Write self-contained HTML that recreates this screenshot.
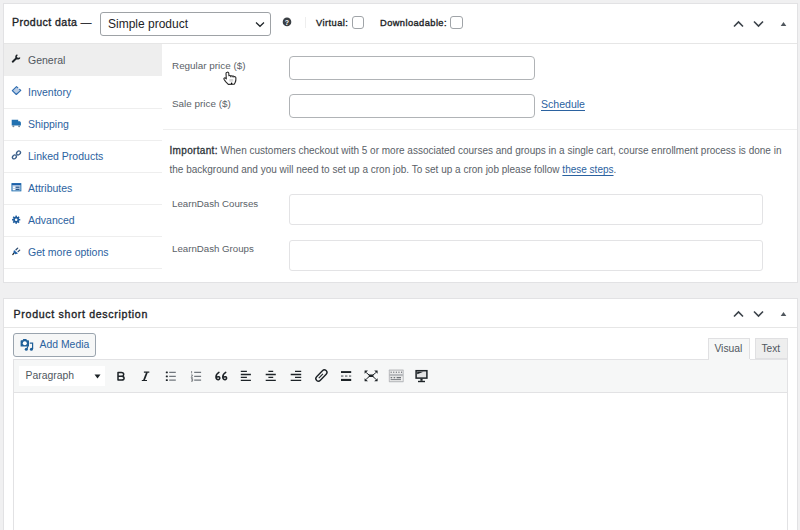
<!DOCTYPE html>
<html><head><meta charset="utf-8"><style>
html,body{margin:0;padding:0}
body{width:800px;height:530px;overflow:hidden;position:relative;background:#f0f0f1;font-family:"Liberation Sans", sans-serif}
</style></head><body>
<div style="position:absolute;left:3px;top:3px;width:795px;height:280px;box-sizing:border-box;border:1px solid #e2e2e4;background:#fff"></div>
<div style="position:absolute;left:4px;top:43px;width:793px;height:1px;background:#e6e6e6"></div>
<div style="position:absolute;left:4px;top:44px;width:158px;height:32px;background:#eeeeee"></div>
<div style="position:absolute;left:4px;top:108px;width:158px;height:1px;background:#eeeeee"></div>
<div style="position:absolute;left:4px;top:140px;width:158px;height:1px;background:#eeeeee"></div>
<div style="position:absolute;left:4px;top:172px;width:158px;height:1px;background:#eeeeee"></div>
<div style="position:absolute;left:4px;top:204px;width:158px;height:1px;background:#eeeeee"></div>
<div style="position:absolute;left:4px;top:236px;width:158px;height:1px;background:#eeeeee"></div>
<div style="position:absolute;left:4px;top:268px;width:158px;height:1px;background:#eeeeee"></div>
<div style="position:absolute;left:12px;top:17.03px;font-size:10.6px;line-height:10.6px;font-weight:400;color:#1d2327;white-space:nowrap;letter-spacing:0.44px;-webkit-text-stroke:0.35px #1d2327">Product data —</div>
<div style="position:absolute;left:100px;top:12px;width:171px;height:24px;box-sizing:border-box;border:1px solid #9ea2a6;border-radius:3px;background:#fff"></div>
<div style="position:absolute;left:108px;top:17.84px;font-size:12px;line-height:12px;font-weight:400;color:#1d2327;white-space:nowrap;">Simple product</div>
<svg style="position:absolute;left:255px;top:21px" width="10" height="7" viewBox="0 0 10 7"><path d="M1 1.5 L5 5.3 L9 1.5" fill="none" stroke="#1d2327" stroke-width="1.2"/></svg>
<svg style="position:absolute;left:282px;top:17px" width="10" height="10" viewBox="0 0 10 10"><circle cx="5" cy="4.9" r="4.3" fill="#3a3f44"/><text x="5" y="7.6" font-family="Liberation Sans" font-weight="700" font-size="7" fill="#fff" text-anchor="middle">?</text></svg>
<div style="position:absolute;left:305px;top:17px;width:1px;height:11px;background:#eeeeee"></div>
<div style="position:absolute;left:316px;top:18.73px;font-size:9.3px;line-height:9.3px;font-weight:400;color:#1d2327;white-space:nowrap;letter-spacing:0.45px;-webkit-text-stroke:0.35px #1d2327">Virtual:</div>
<div style="position:absolute;left:352px;top:16px;width:12px;height:12.5px;box-sizing:border-box;border:1px solid #a0a4a8;border-radius:3px;background:#fff"></div>
<div style="position:absolute;left:380px;top:18.73px;font-size:9.3px;line-height:9.3px;font-weight:400;color:#1d2327;white-space:nowrap;letter-spacing:0.42px;-webkit-text-stroke:0.35px #1d2327">Downloadable:</div>
<div style="position:absolute;left:450px;top:16px;width:12.5px;height:12.5px;box-sizing:border-box;border:1px solid #a0a4a8;border-radius:3px;background:#fff"></div>
<svg style="position:absolute;left:732px;top:19px" width="60" height="10" viewBox="0 0 60 10"><path d="M2 7.5 L6.5 3 L11 7.5" fill="none" stroke="#3c434a" stroke-width="1.6"/><path d="M22 2.5 L26.5 7 L31 2.5" fill="none" stroke="#3c434a" stroke-width="1.6"/><path d="M48.7 7 L51.5 3 L54.3 7 Z" fill="#50575e"/></svg>
<div style="position:absolute;left:28px;top:54.81px;font-size:10.5px;line-height:10.5px;font-weight:400;color:#50575e;white-space:nowrap;">General</div>
<div style="position:absolute;left:28px;top:86.81px;font-size:10.5px;line-height:10.5px;font-weight:400;color:#2b62a0;white-space:nowrap;">Inventory</div>
<div style="position:absolute;left:28px;top:118.81px;font-size:10.5px;line-height:10.5px;font-weight:400;color:#2b62a0;white-space:nowrap;">Shipping</div>
<div style="position:absolute;left:28px;top:150.81px;font-size:10.5px;line-height:10.5px;font-weight:400;color:#2b62a0;white-space:nowrap;">Linked Products</div>
<div style="position:absolute;left:28px;top:182.81px;font-size:10.5px;line-height:10.5px;font-weight:400;color:#2b62a0;white-space:nowrap;">Attributes</div>
<div style="position:absolute;left:28px;top:214.81px;font-size:10.5px;line-height:10.5px;font-weight:400;color:#2b62a0;white-space:nowrap;">Advanced</div>
<div style="position:absolute;left:28px;top:246.81px;font-size:10.5px;line-height:10.5px;font-weight:400;color:#2b62a0;white-space:nowrap;">Get more options</div>
<div style="position:absolute;left:172px;top:60.82px;font-size:9.9px;line-height:9.9px;font-weight:400;color:#5a6167;white-space:nowrap;">Regular price ($)</div>
<div style="position:absolute;left:289px;top:56px;width:246px;height:23.5px;box-sizing:border-box;border:1px solid #b0b3b6;border-radius:4px;background:#fff"></div>
<div style="position:absolute;left:172px;top:99.32px;font-size:9.9px;line-height:9.9px;font-weight:400;color:#5a6167;white-space:nowrap;">Sale price ($)</div>
<div style="position:absolute;left:289px;top:94px;width:246px;height:24px;box-sizing:border-box;border:1px solid #b0b3b6;border-radius:4px;background:#fff"></div>
<div style="position:absolute;left:541px;top:98.77px;font-size:10.55px;line-height:10.55px;font-weight:400;color:#2b62a0;white-space:nowrap;text-decoration:underline;text-decoration-thickness:0.8px;text-underline-offset:1.5px">Schedule</div>
<div style="position:absolute;left:163px;top:129px;width:634px;height:1px;background:#eeeeee"></div>
<div style="position:absolute;left:169.5px;top:146.03px;font-size:10.0px;line-height:10.0px;font-weight:400;color:#5a6167;white-space:nowrap;"><span style="color:#2c3338;letter-spacing:0.33px;-webkit-text-stroke:0.3px #2c3338">Important:</span> When customers checkout with 5 or more associated courses and groups in a single cart, course enrollment process is done in</div>
<div style="position:absolute;left:169.5px;top:164.84px;font-size:10.0px;line-height:10.0px;font-weight:400;color:#5a6167;white-space:nowrap;">the background and you will need to set up a cron job. To set up a cron job please follow <span style="color:#2b62a0;text-decoration:underline;text-decoration-thickness:0.8px;text-underline-offset:1.5px">these steps</span>.</div>
<div style="position:absolute;left:172px;top:198.79px;font-size:9.7px;line-height:9.7px;font-weight:400;color:#5a6167;white-space:nowrap;">LearnDash Courses</div>
<div style="position:absolute;left:289px;top:194px;width:474px;height:31px;box-sizing:border-box;border:1px solid #e3e3e5;border-radius:3px;background:#fff"></div>
<div style="position:absolute;left:172px;top:244.49px;font-size:9.7px;line-height:9.7px;font-weight:400;color:#5a6167;white-space:nowrap;">LearnDash Groups</div>
<div style="position:absolute;left:289px;top:240px;width:474px;height:31px;box-sizing:border-box;border:1px solid #e3e3e5;border-radius:3px;background:#fff"></div>
<div style="position:absolute;left:3px;top:298px;width:795px;height:260px;box-sizing:border-box;border:1px solid #e2e2e4;background:#fff"></div>
<div style="position:absolute;left:4px;top:327px;width:793px;height:1px;background:#e6e6e6"></div>
<div style="position:absolute;left:13.6px;top:308.83px;font-size:10.6px;line-height:10.6px;font-weight:400;color:#1d2327;white-space:nowrap;letter-spacing:0.69px;-webkit-text-stroke:0.35px #1d2327">Product short description</div>
<svg style="position:absolute;left:732px;top:308.5px" width="60" height="10" viewBox="0 0 60 10"><path d="M2 7.5 L6.5 3 L11 7.5" fill="none" stroke="#3c434a" stroke-width="1.6"/><path d="M22 2.5 L26.5 7 L31 2.5" fill="none" stroke="#3c434a" stroke-width="1.6"/><path d="M48.7 7 L51.5 3 L54.3 7 Z" fill="#50575e"/></svg>
<div style="position:absolute;left:13px;top:333px;width:83px;height:23.5px;box-sizing:border-box;border:1px solid #9aa4ae;border-radius:3px;background:#f6f7f7"></div>
<div style="position:absolute;left:39.6px;top:340.40px;font-size:10.4px;line-height:10.4px;font-weight:400;color:#2b62a0;white-space:nowrap;">Add Media</div>
<div style="position:absolute;left:708px;top:338px;width:42px;height:22px;box-sizing:border-box;border:1px solid #e0e0e2;border-bottom:none;background:#f6f7f7"></div>
<div style="position:absolute;left:714.4px;top:343.94px;font-size:10.35px;line-height:10.35px;font-weight:400;color:#50575e;white-space:nowrap;">Visual</div>
<div style="position:absolute;left:754.5px;top:338px;width:33.5px;height:21px;box-sizing:border-box;border:1px solid #e0e0e2;background:#eeeeee"></div>
<div style="position:absolute;left:761.5px;top:344.15px;font-size:10.1px;line-height:10.1px;font-weight:400;color:#50575e;white-space:nowrap;">Text</div>
<div style="position:absolute;left:13px;top:359px;width:775px;height:34px;box-sizing:border-box;border:1px solid #e2e2e4;background:#f6f7f7"></div>
<div style="position:absolute;left:708.5px;top:359px;width:41px;height:1.5px;background:#f6f7f7"></div>
<div style="position:absolute;left:18.5px;top:365.5px;width:86.5px;height:20.5px;background:#fff"></div>
<div style="position:absolute;left:25.6px;top:370.80px;font-size:10.4px;line-height:10.4px;font-weight:400;color:#50575e;white-space:nowrap;">Paragraph</div>
<svg style="position:absolute;left:94px;top:374px" width="7" height="5" viewBox="0 0 7 5"><path d="M0.5 0.5 L6.5 0.5 L3.5 4.5 Z" fill="#1d2327"/></svg>
<div style="position:absolute;left:13px;top:393px;width:775px;height:200px;box-sizing:border-box;border:1px solid #e2e2e4;border-top:none;background:#fff"></div>
<svg style="position:absolute;left:8px;top:50px;overflow:visible" width="18" height="18" viewBox="0 0 18 18"><path d="M4.7 11.7 L8.6 8.0" stroke="#1d2327" stroke-width="1.9" stroke-linecap="round"/><path d="M9.4 5.0 A1.9 1.9 0 1 0 11.7 7.5" fill="none" stroke="#1d2327" stroke-width="1.6"/></svg>
<svg style="position:absolute;left:8px;top:82px;overflow:visible" width="18" height="18" viewBox="0 0 18 18"><path d="M4.3 8.7 L8.5 4.6 L12.8 8.3 L8.3 12.5 Z" fill="#b9cce4" stroke="#2d6cb0" stroke-width="1.1" stroke-linejoin="round"/><circle cx="10.9" cy="6.4" r="0.8" fill="#fff"/></svg>
<svg style="position:absolute;left:8px;top:114px;overflow:visible" width="18" height="18" viewBox="0 0 18 18"><path d="M3.7 5.8 H10.2 V7.3 H12.0 L12.9 8.6 V11.6 H3.7 Z" fill="#2271b1"/><circle cx="5.4" cy="12.3" r="1.0" fill="#7a8a9a"/><circle cx="11.1" cy="12.3" r="1.0" fill="#7a8a9a"/></svg>
<svg style="position:absolute;left:8px;top:146px;overflow:visible" width="18" height="18" viewBox="0 0 18 18"><g fill="none" stroke="#3b5f8a" stroke-width="1.3"><ellipse cx="6.4" cy="10.9" rx="2.2" ry="1.7" transform="rotate(-45 6.4 10.9)"/><ellipse cx="10.5" cy="6.9" rx="2.2" ry="1.7" transform="rotate(-45 10.5 6.9)"/></g></svg>
<svg style="position:absolute;left:8px;top:178px;overflow:visible" width="18" height="18" viewBox="0 0 18 18"><rect x="3.9" y="5.6" width="9" height="7.3" fill="#b5c9e2" stroke="#2271b1" stroke-width="0.9"/><rect x="3.9" y="5.4" width="9" height="1.7" fill="#1d5fa8"/><rect x="5.0" y="8.6" width="2.0" height="1.3" fill="#fff"/><rect x="5.0" y="10.8" width="2.0" height="1.3" fill="#fff"/><rect x="7.8" y="8.7" width="3.6" height="1.1" fill="#2b5688"/><rect x="7.8" y="10.9" width="3.6" height="1.1" fill="#2b5688"/></svg>
<svg style="position:absolute;left:8px;top:210px;overflow:visible" width="18" height="18" viewBox="0 0 18 18"><rect x="7.35" y="5.6" width="1.6" height="2.2" fill="#1f5d9e" transform="rotate(0 8.15 9.7)"/><rect x="7.35" y="5.6" width="1.6" height="2.2" fill="#1f5d9e" transform="rotate(45 8.15 9.7)"/><rect x="7.35" y="5.6" width="1.6" height="2.2" fill="#1f5d9e" transform="rotate(90 8.15 9.7)"/><rect x="7.35" y="5.6" width="1.6" height="2.2" fill="#1f5d9e" transform="rotate(135 8.15 9.7)"/><rect x="7.35" y="5.6" width="1.6" height="2.2" fill="#1f5d9e" transform="rotate(180 8.15 9.7)"/><rect x="7.35" y="5.6" width="1.6" height="2.2" fill="#1f5d9e" transform="rotate(225 8.15 9.7)"/><rect x="7.35" y="5.6" width="1.6" height="2.2" fill="#1f5d9e" transform="rotate(270 8.15 9.7)"/><rect x="7.35" y="5.6" width="1.6" height="2.2" fill="#1f5d9e" transform="rotate(315 8.15 9.7)"/><circle cx="8.15" cy="9.7" r="2.9" fill="#1f5d9e"/><circle cx="8.15" cy="9.7" r="1.25" fill="#fff"/></svg>
<svg style="position:absolute;left:8px;top:242px;overflow:visible" width="18" height="18" viewBox="0 0 18 18"><path d="M6.0 8.0 L10.0 11.6 L7.3 12.3 L5.3 10.6 Z" fill="#1e5fa6"/><path d="M5.7 11.4 L4.8 12.6" stroke="#1d2327" stroke-width="1.2" stroke-linecap="round"/><path d="M8.0 7.7 L9.7 6.1" stroke="#2b4a6e" stroke-width="1.3" stroke-linecap="round"/><path d="M10.1 9.6 L11.7 8.1" stroke="#2b4a6e" stroke-width="1.3" stroke-linecap="round"/></svg>
<svg style="position:absolute;left:216px;top:66px;overflow:visible" width="28" height="28" viewBox="0 0 28 28"><path d="M11.2 6.2 C12.2 6.0 12.8 6.6 12.8 7.6 L12.9 9.8 C13.5 9.3 14.3 9.4 14.6 10.0 C15.1 9.5 15.9 9.6 16.2 10.2 C16.7 9.8 17.6 10.0 17.9 10.6 C18.6 10.3 19.8 10.8 19.9 11.8 C20.0 13.5 19.9 15.2 19.2 16.4 L18.2 18.3 L12.3 18.4 L9.6 15.6 L8.0 13.2 C7.5 12.3 8.5 11.5 9.4 12.0 L10.3 12.8 L10.0 7.4 C10.0 6.8 10.5 6.3 11.2 6.2 Z" fill="#fff" stroke="#2a2a2a" stroke-width="1.1" stroke-linejoin="round"/><path d="M14.6 10.0 V11.3 M16.2 10.2 V11.4 M17.9 10.6 V11.6" stroke="#2a2a2a" stroke-width="0.8"/><path d="M13.4 13.8 H17.2 M13.4 15.0 H17.2" stroke="#b5b5b5" stroke-width="0.8"/><circle cx="15.6" cy="17.4" r="0.8" fill="#000"/></svg>
<svg style="position:absolute;left:15px;top:334px;overflow:visible" width="28" height="22" viewBox="0 0 28 22"><path d="M5.6 6.9 Q5.6 6.3 6.2 6.3 H7.6 L8.3 5.0 H11.3 L12.0 6.3 H13.4 Q14.0 6.3 14.0 6.9 V12.6 H5.6 Z" fill="#1e5f99"/><circle cx="9.8" cy="9.3" r="2.0" fill="#fff"/><path d="M14.8 9.1 H17.6 V15.0" fill="none" stroke="#1e5f99" stroke-width="1.2"/><circle cx="16.4" cy="15.2" r="1.5" fill="#1e5f99"/><circle cx="11.3" cy="15.2" r="1.5" fill="#1e5f99"/><path d="M12.3 14.8 L12.6 12.3" stroke="#1e5f99" stroke-width="1.2"/></svg>
<svg style="position:absolute;left:0;top:0" width="800" height="530" viewBox="0 0 800 530"><path d="M118.0 372.5 H121.3 C123.0 372.5 123.7 373.4 123.7 374.5 C123.7 375.5 123.0 376.1 122.0 376.2 C123.2 376.3 124.1 377.1 124.1 378.3 C124.1 379.5 123.2 380.1 121.5 380.1 H118.0 Z M118.0 376.2 H121.9" fill="none" stroke="#1d2327" stroke-width="1.5" stroke-linejoin="round"/><path d="M143.9 372.2 H149.3 M141.8 380.5 H147.0" stroke="#1d2327" stroke-width="1.2"/><path d="M147.0 372.3 L143.9 380.4" stroke="#1d2327" stroke-width="1.7"/><g fill="#1d2327"><rect x="165.8" y="371.4" width="2.0" height="1.8" rx="0.5"/><rect x="165.8" y="375.4" width="2.0" height="1.8" rx="0.5"/><rect x="165.8" y="379.2" width="2.0" height="1.8" rx="0.5"/></g><g stroke="#50575e" stroke-width="1.0"><path d="M169.2 372.3 H175.8 M169.2 376.3 H175.8 M169.2 380.1 H175.8"/><path d="M194.2 372.3 H201.1 M194.2 376.3 H201.1 M194.2 380.1 H201.1"/></g><g stroke="#6b6f74" stroke-width="0.8" fill="none"><path d="M191.6 371.0 V373.4 M191.0 375.0 H192.6 L191.2 377.4 H192.8 M191.0 378.6 H192.6 V381.2 H191.0 M191.2 379.9 H192.6"/></g><g fill="none" stroke="#1d2327" stroke-width="1.6" stroke-linecap="round"><path transform="translate(212 368)" d="M6.9 4.4 C4.9 5.6 3.9 7.5 4.0 9.3 C4.1 11.1 5.3 11.8 6.4 11.7 C7.5 11.5 7.9 10.6 7.7 9.7 C7.5 8.8 6.4 8.5 5.2 9.0"/><path transform="translate(218.8 368)" d="M6.9 4.4 C4.9 5.6 3.9 7.5 4.0 9.3 C4.1 11.1 5.3 11.8 6.4 11.7 C7.5 11.5 7.9 10.6 7.7 9.7 C7.5 8.8 6.4 8.5 5.2 9.0"/></g><g stroke="#1d2327" stroke-width="1.3"><path d="M240.8 371.3 H246.9 M240.8 374.5 H250.9 M240.8 377.4 H246.9 M240.8 380.4 H250.9"/><path d="M268.4 371.3 H273.2 M265.7 374.5 H275.8 M268.4 377.4 H273.2 M265.7 380.4 H275.8"/><path d="M295.0 371.3 H301.2 M290.7 374.5 H301.2 M295.0 377.4 H301.2 M290.7 380.4 H301.2"/></g><g transform="rotate(-46 321.4 375.5)" fill="none" stroke="#1d2327"><rect x="314.6" y="372.9" width="13.6" height="5.2" rx="2.6" stroke-width="1.4"/><path d="M317.6 375.5 H323.6" stroke-width="1.1"/></g><g fill="#1d2327"><rect x="341" y="371.1" width="10.2" height="1.9"/><rect x="341" y="378.9" width="10.2" height="2.1"/></g><g fill="#50575e"><rect x="341" y="375.5" width="2.4" height="1.1"/><rect x="345" y="375.5" width="2.4" height="1.1"/><rect x="349" y="375.5" width="2.2" height="1.1"/></g><g stroke="#1d2327" stroke-width="1.0"><path d="M366.2 372.6 L369.6 375.4 M375.9 372.6 L372.5 375.4 M366.2 379.2 L369.6 376.2 M375.9 379.2 L372.5 376.2"/></g><rect x="368.8" y="374.5" width="4.6" height="2.5" fill="#1d2327"/><g fill="#1d2327"><path d="M364.6 370.6 H368.0 L364.6 373.7 Z M377.6 370.6 H374.2 L377.6 373.7 Z M364.6 381.3 H368.0 L364.6 378.2 Z M377.6 381.3 H374.2 L377.6 378.2 Z"/></g><rect x="388.8" y="369.6" width="14.9" height="12.6" rx="0.6" fill="#b9bbbe"/><g fill="#efefef"><rect x="389.8" y="370.7" width="12.9" height="3.2"/><rect x="389.8" y="376.2" width="12.9" height="4.9"/></g><g fill="#6e7277"><rect x="390.6" y="371.6" width="1.1" height="1.3"/><rect x="393.2" y="371.6" width="1.1" height="1.3"/><rect x="395.8" y="371.6" width="1.1" height="1.3"/><rect x="398.4" y="371.6" width="1.1" height="1.3"/><rect x="401" y="371.6" width="1.1" height="1.3"/><rect x="390.6" y="377.0" width="1.6" height="1.3"/><rect x="393.6" y="377.0" width="1.6" height="1.3"/><rect x="396.6" y="377.0" width="4.4" height="1.3"/><rect x="390.6" y="379.2" width="10.4" height="0.9"/></g><rect x="416.1" y="370.7" width="10.8" height="7.4" fill="#e4e4e5" stroke="#1d2327" stroke-width="1.5"/><path d="M417.2 371.8 H423.4 L417.2 374.2 Z" fill="#1d2327"/><rect x="420.4" y="378.6" width="2.2" height="2.2" fill="#1d2327"/><rect x="418" y="380.8" width="7" height="1.4" fill="#1d2327"/></svg>
</body></html>
